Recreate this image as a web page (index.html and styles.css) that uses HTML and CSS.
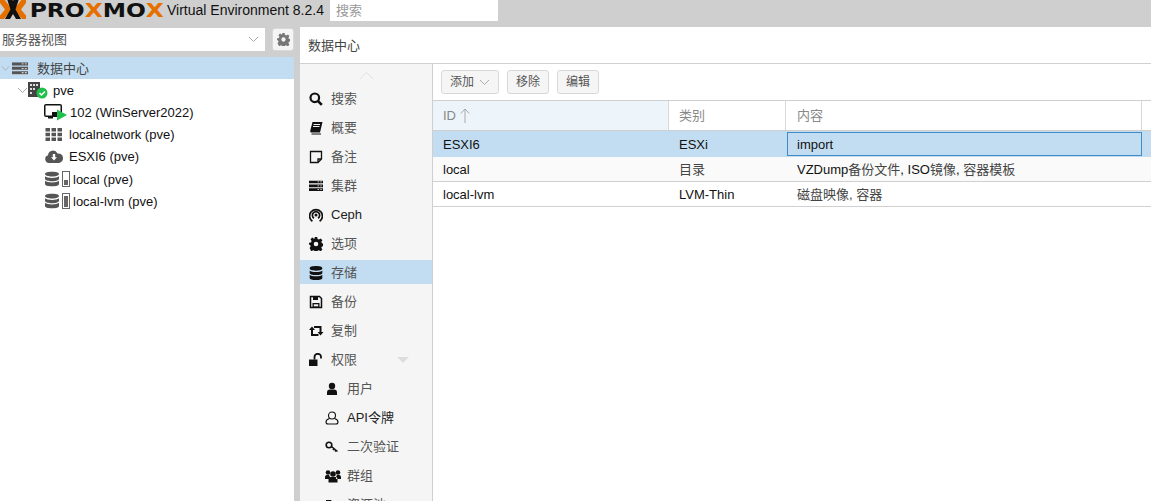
FILE: index.html
```html
<!DOCTYPE html>
<html lang="zh">
<head>
    <title>pve - Proxmox Virtual Environment</title>
    <link rel="stylesheet" href="styles.css">
</head>
<body>
    <div class="topbar">
        <svg class="logo-x" width="26" height="21" viewBox="0 0 26 21">
            <path d="M-3 -1H4L12 9.500 4 19H-3L5 9.500z" fill="#e57000"/>
            <path d="M29 -1H22L14 9.500 22 19H29L21 9.500z" fill="#e57000"/>
            <path d="M7 -1h5l1 2 1-2h5L15.500 9.500 21 19h-5l-3-5-3 5H5l5.500-9.500z" fill="#111"/>
        </svg>
        <div class="logo-word"><span>PRO</span><span class="orange">X</span><span>MO</span><span class="orange">X</span></div>
        <div class="version">Virtual Environment 8.2.4</div>
        <div class="search">搜索</div>
    </div>
    <div class="main">
        <div class="side">
            <div class="side-tools">
                <div class="view-select">
                    <span>服务器视图</span>
                    <svg width="11" height="7" viewBox="0 0 11 7"><path d="M1 1l4.500 4.500L10 1" fill="none" stroke="#aaa"/></svg>
                </div>
                <div class="gear-btn">
                    <svg width="13" height="13" viewBox="0 0 14 14"><use href="#gear" fill="#777"/></svg>
                </div>
            </div>
            <div class="tree">
                <div class="tree-row selected">
                    <svg class="twist" width="9" height="7" viewBox="0 0 11 7"><path d="M1 1l4.500 4.500L10 1" fill="none" stroke="#aaa"/></svg>
                    <svg class="tree-icon" width="16" height="13" viewBox="0 0 18 14"><use href="#server" fill="#555"/></svg>
                    <span class="dc-label">数据中心</span>
                </div>
                <div class="tree-row node-row">
                    <svg class="twist" width="11" height="7" viewBox="0 0 11 7"><path d="M1 1l4.500 4.500L10 1" fill="none" stroke="#aaa"/></svg>
                    <svg class="node-icon" width="20" height="17" viewBox="0 0 20 17">
                        <path d="M0 0h12v15H0z" fill="#444"/>
                        <path d="M2 2h2v2H2zM5 2h2v2H5zM8 2h2v2H8zM2 6h2v2H2zM5 6h2v2H5zM2 10h2v2H2z" fill="#ddd"/>
                        <circle cx="14" cy="11" r="5.500" fill="#21bf4b"/>
                        <path d="M11.500 11l2 2 3.500-3.500" fill="none" stroke="#fff" stroke-width="1.500"/>
                    </svg>
                    <span>pve</span>
                </div>
                <div class="tree-row leaf-row">
                    <svg class="vm-icon" width="24" height="17" viewBox="0 0 24 17">
                        <path d="M0 2q0-2 2-2h14q2 0 2 2v9q0 2-2 2H9v1.500H4V13H2q-2 0-2-2z" fill="#111"/>
                        <path d="M1.500 1.500h15v6.500H8v3.500H1.500z" fill="#fff"/>
                        <path d="M13 5.500l10 5.500-10 5.500z" fill="#21bf4b"/>
                    </svg>
                    <span>102 (WinServer2022)</span>
                </div>
                <div class="tree-row leaf-row">
                    <svg class="leaf-icon" width="17" height="13" viewBox="0 0 17 13" fill="#555">
                        <path d="M0 0h4.500v3.500H0zM6 0h4.500v3.500H6zM12 0h4.500v3.500H12zM0 4.800h4.500v3.500H0zM6 4.800h4.500v3.500H6zM12 4.800h4.500v3.500H12zM0 9.500h4.500V13H0zM6 9.500h4.500V13H6zM12 9.500h4.500V13H12z"/>
                    </svg>
                    <span>localnetwork (pve)</span>
                </div>
                <div class="tree-row leaf-row">
                    <svg class="leaf-icon" width="18" height="13" viewBox="0 0 18 13">
                        <path d="M4 13a4 4 0 0 1-1-7.800A5 5 0 0 1 12.500 3.500 4.800 4.800 0 0 1 14 13z" fill="#555"/>
                        <path d="M7.800 4h2.400v3.200H12L9 10.500 6 7.200h1.800z" fill="#fff"/>
                    </svg>
                    <span>ESXI6 (pve)</span>
                </div>
                <div class="tree-row storage-row">
                    <svg class="db-icon" width="14" height="16" viewBox="0 0 15 16"><use href="#db" fill="#555"/></svg>
                    <span class="bar-icon"><span class="bar-fill low"></span></span>
                    <span>local (pve)</span>
                </div>
                <div class="tree-row storage-row">
                    <svg class="db-icon" width="14" height="16" viewBox="0 0 15 16"><use href="#db" fill="#555"/></svg>
                    <span class="bar-icon"><span class="bar-fill high"></span></span>
                    <span>local-lvm (pve)</span>
                </div>
            </div>
        </div>
        <div class="content">
            <div class="title">数据中心</div>
            <div class="body">
                <div class="menu">
                    <div class="menu-up">
                        <svg width="15" height="9" viewBox="0 0 17 10"><path d="M1 9l7.500-7.500L16 9" fill="none" stroke="#ddd"/></svg>
                    </div>
                    <div class="menu-item">
                        <svg width="14" height="14" viewBox="0 0 14 14"><circle cx="5.800" cy="5.800" r="4.300" fill="none" stroke="#111" stroke-width="2.200"/><path d="M8.800 8.800l4 4" stroke="#111" stroke-width="2.600"/></svg>
                        <span>搜索</span>
                    </div>
                    <div class="menu-item">
                        <svg width="14" height="14" viewBox="0 0 14 14"><path d="M3.500 1H13.500L11 11.500H2.500q-1.500 0-1.300-1.500z" fill="#111"/><path d="M4.500 3.500h6.500M4 5.500h6.500" stroke="#f5f5f5"/><path d="M2.500 13h9.500" stroke="#111"/></svg>
                        <span>概要</span>
                    </div>
                    <div class="menu-item">
                        <svg width="14" height="14" viewBox="0 0 14 14"><path d="M1.500 1.500h11v7.500l-3.500 3.500H1.500zM12.500 9H9v3.500" fill="none" stroke="#111" stroke-width="1.300"/></svg>
                        <span>备注</span>
                    </div>
                    <div class="menu-item">
                        <svg width="14" height="14" viewBox="0 0 14 14"><use href="#server" fill="#111" y="1.500" width="14" height="11"/></svg>
                        <span>集群</span>
                    </div>
                    <div class="menu-item">
                        <svg width="14" height="14" viewBox="0 0 14 14"><path d="M3.400 13.300a6.400 6.400 0 1 1 7.200 0M5 10.300a3.600 3.600 0 1 1 4 0" fill="none" stroke="#111" stroke-width="1.700"/><circle cx="7" cy="7" r="1.500" fill="#111"/></svg>
                        <span class="latin">Ceph</span>
                    </div>
                    <div class="menu-item">
                        <svg width="14" height="14" viewBox="0 0 14 14"><use href="#gear" fill="#111"/></svg>
                        <span>选项</span>
                    </div>
                    <div class="menu-item active">
                        <svg width="14" height="14" viewBox="0 0 15 16"><use href="#db" fill="#111"/></svg>
                        <span>存储</span>
                    </div>
                    <div class="menu-item">
                        <svg width="14" height="14" viewBox="0 0 14 14"><path d="M1.500 1.500h9l2 2v9h-11z" fill="none" stroke="#111" stroke-width="1.500"/><path d="M4 1.500h5v3.500H4zM3.500 8h7v4.500h-7z" fill="#111"/><path d="M4.800 9.300h4.400v2H4.800z" fill="#f5f5f5"/></svg>
                        <span>备份</span>
                    </div>
                    <div class="menu-item">
                        <svg width="15" height="14" viewBox="0 0 15 14"><path d="M3 5v6h6.500M11.500 9V3H5" fill="none" stroke="#111" stroke-width="2"/><path d="M0 6l3-3.500L6 6zM8.500 8h6l-3 3.500z" fill="#111"/></svg>
                        <span class="copy-label">复制</span>
                    </div>
                    <div class="menu-item">
                        <svg width="14" height="14" viewBox="0 0 14 14"><path d="M0 6.500h8.500V13H0z" fill="#111"/><path d="M5.500 6.500V4a3.200 3.200 0 0 1 6.500 0v1.500" fill="none" stroke="#111" stroke-width="1.800"/></svg>
                        <span>权限</span>
                        <svg class="menu-caret" width="12" height="7" viewBox="0 0 12 7"><path d="M0 0h12L6 6z" fill="#ddd"/></svg>
                    </div>
                    <div class="menu-item sub">
                        <svg width="14" height="14" viewBox="0 0 14 14"><circle cx="7" cy="4" r="3.200" fill="#111"/><path d="M2 13v-2.500Q2 7.500 5 7.500h4q3 0 3 3V13z" fill="#111"/></svg>
                        <span>用户</span>
                    </div>
                    <div class="menu-item sub">
                        <svg width="14" height="14" viewBox="0 0 14 14"><circle cx="7" cy="4.500" r="3.500" fill="none" stroke="#111" stroke-width="1.100"/><path d="M4.500 7.500Q1 8.500 1 11q0 2 2 2h8q2 0 2-2 0-2.500-3.500-3.500" fill="none" stroke="#111" stroke-width="1.100"/></svg>
                        <span class="latin">API令牌</span>
                    </div>
                    <div class="menu-item sub">
                        <svg width="14" height="14" viewBox="0 0 14 14"><circle cx="4" cy="5" r="2.800" fill="none" stroke="#111" stroke-width="1.600"/><path d="M6.500 6.500l6 5M9 8.500l-1 1.500M11 10l-1 1.500" fill="none" stroke="#111" stroke-width="1.500"/></svg>
                        <span>二次验证</span>
                    </div>
                    <div class="menu-item sub">
                        <svg width="16" height="14" viewBox="0 0 16 14" fill="#111"><circle cx="3" cy="3.500" r="2.300"/><circle cx="13" cy="3.500" r="2.300"/><circle cx="8" cy="5" r="2.800"/><path d="M0 10V8q0-2 2-2h2l1 2v2zM16 10V8q0-2-2-2h-2l-1 2v2zM3.500 13.500V10q0-2 2-2h5q2 0 2 2v3.500z"/></svg>
                        <span class="group-label">群组</span>
                    </div>
                    <div class="menu-item sub">
                        <svg width="14" height="14" viewBox="0 0 14 14" fill="#111"><path d="M1 2h5l1 1.500h6V12H1z"/></svg>
                        <span>资源池</span>
                    </div>
                </div>
                <div class="panel">
                    <div class="toolbar">
                        <div class="btn">添加
                            <svg width="11" height="7" viewBox="0 0 11 7"><path d="M1 1l4.500 4.500L10 1" fill="none" stroke="#aaa"/></svg>
                        </div>
                        <div class="btn">移除</div>
                        <div class="btn">编辑</div>
                    </div>
                    <div class="grid">
                        <div class="grid-head">
                            <div class="cell col-id sorted">ID
                                <svg width="10" height="15" viewBox="0 0 10 15"><path d="M5 15V1M.7 5.500L5 1l4.300 4.500" fill="none" stroke="#aaa"/></svg>
                            </div>
                            <div class="cell col-type">类别</div>
                            <div class="cell col-content">内容</div>
                        </div>
                        <div class="grid-row picked">
                            <div class="cell col-id">ESXI6</div>
                            <div class="cell col-type">ESXi</div>
                            <div class="cell col-content focused">import</div>
                        </div>
                        <div class="grid-row alt">
                            <div class="cell col-id">local</div>
                            <div class="cell col-type"><span class="cjk">目录</span></div>
                            <div class="cell col-content"><span>VZDump<span class="cjk">备份文件</span>, ISO<span class="cjk">镜像</span>, <span class="cjk">容器模板</span></span></div>
                        </div>
                        <div class="grid-row">
                            <div class="cell col-id">local-lvm</div>
                            <div class="cell col-type">LVM-Thin</div>
                            <div class="cell col-content"><span class="cjk">磁盘映像, 容器</span></div>
                        </div>
                    </div>
                </div>
            </div>
        </div>
    </div>

    <svg width="0" height="0" class="defs">
        <symbol id="gear" viewBox="0 0 14 14">
            <path d="M5.800 0h2.400l.4 2 1.300.6 1.800-1.100 1.700 1.700-1.100 1.800.6 1.300 2 .4v2.400l-2 .4-.6 1.300 1.100 1.800-1.700 1.700-1.800-1.100-1.300.6-.4 2H5.800l-.4-2-1.300-.6-1.800 1.100L.6 11.100l1.100-1.800L1.100 8 0 7.600V5.800l2-.4.600-1.300L1.500 2.300 3.200.6 5 1.700l.6-.3zM7 4.700a2.300 2.300 0 1 0 0 4.600 2.300 2.300 0 0 0 0-4.600z" fill-rule="evenodd"/>
        </symbol>
        <symbol id="server" viewBox="0 0 18 14">
            <path d="M0 0h18v3.500H0zM0 5h18v3.500H0zM0 10h18v3.500H0z"/>
            <path d="M11 1.300h2v1h-2zM14.500 1.300h2v1h-2zM11 6.300h2v1h-2zM14.500 6.300h2v1h-2zM11 11.300h2v1h-2zM14.500 11.300h2v1h-2z" fill="#fff"/>
        </symbol>
        <symbol id="db" viewBox="0 0 15 16">
            <path d="M7.500 0C11.500 0 15 1 15 2.700S11.500 5.400 7.500 5.400 0 4.400 0 2.700 3.500 0 7.500 0zM0 5c1.500 1.300 4.500 1.800 7.500 1.800S13.500 6.300 15 5v2.600c0 1.700-3.500 2.700-7.500 2.700S0 9.300 0 7.600zM0 10c1.500 1.300 4.500 1.800 7.500 1.800s6-.5 7.500-1.800v3.300C15 15 11.500 16 7.500 16S0 15 0 13.300z"/>
        </symbol>
    </svg>
</body>
</html>
```

FILE: styles.css
```css
* {
    margin: 0;
    padding: 0;
    box-sizing: border-box;
}
html, body {
    height: 100%;
    overflow: hidden;
}
body {
    font-family: "Liberation Sans", "Noto Sans CJK SC", sans-serif;
    font-size: 13px;
    line-height: 15px;
    color: #000;
    background: #cfcfcf;
}
.defs {
    position: absolute;
}
.topbar {
    display: flex;
    height: 27px;
    overflow: hidden;
    background: #cfcfcf;
}
.logo-x {
    flex: none;
    width: 26px;
}
.logo-word {
    display: flex;
    align-items: center;
    width: 141px;
    height: 21px;
    padding-left: 3px;
    font-family: "DejaVu Sans", sans-serif;
    font-weight: bold;
    font-size: 19px;
    color: #111;
    transform: scaleX(1.23);
    transform-origin: left center;
}
.orange {
    color: #e57000;
}
.version {
    width: 163px;
    height: 21px;
    line-height: 21px;
    font-size: 14px;
    color: #111;
}
.search {
    display: flex;
    align-items: center;
    width: 168px;
    height: 21px;
    background: #fff;
    color: #999;
    padding-left: 6px;
}
.main {
    display: flex;
    height: 474px;
}
.side {
    width: 294px;
    flex: none;
}
.side-tools {
    display: flex;
    gap: 7px;
    height: 30px;
    padding-top: 1px;
}
.view-select {
    display: flex;
    justify-content: space-between;
    align-items: center;
    width: 265px;
    height: 23px;
    background: #fff;
    color: #555;
    padding: 0 6px 0 2px;
}
.gear-btn {
    display: flex;
    align-items: center;
    justify-content: center;
    width: 22px;
    height: 23px;
    background: #f5f5f5;
    border: 1px solid #d8d8d8;
    border-radius: 3px;
}
.tree {
    background: #fff;
    height: 444px;
}
.tree-row {
    display: flex;
    align-items: center;
    height: 22px;
    color: #111;
}
.tree-row.selected {
    background: #c2ddf2;
    color: #444;
}
.twist {
    flex: none;
}
.selected .twist {
    margin-left: 1px;
}
.tree-icon {
    margin-left: 2px;
}
.dc-label {
    margin-left: 9px;
}
.node-row .twist {
    margin-left: 17px;
}
.node-icon {
    margin-right: 5px;
}
.leaf-row, .storage-row {
    padding-left: 44px;
}
.leaf-row + .storage-row {
    margin-top: 1px;
}
.vm-icon {
    margin-right: 2px;
    flex: none;
}
.leaf-icon {
    width: 20px;
    margin-right: 5px;
    flex: none;
}
.db-icon {
    margin-left: 1px;
}
.bar-icon {
    display: flex;
    align-items: flex-end;
    width: 8px;
    height: 16px;
    margin: 0 3px;
    padding: 1px;
    border: 1px solid #666;
    background: #fff;
}
.bar-fill {
    display: block;
    width: 100%;
    background: #666;
}
.bar-fill.low {
    height: 45%;
}
.bar-fill.high {
    height: 90%;
}
.content {
    flex: 1;
    margin-left: 6px;
    background: #fff;
    min-width: 0;
}
.title {
    display: flex;
    align-items: center;
    height: 37px;
    padding-left: 8px;
    color: #444;
    background: #fff;
    border-bottom: 1px solid #d0d0d0;
}
.body {
    display: flex;
    height: 437px;
}
.menu {
    width: 133px;
    flex: none;
    overflow: hidden;
    background: #f5f5f5;
    border-right: 1px solid #cfcfcf;
}
.menu-up {
    display: flex;
    justify-content: center;
    height: 22px;
    padding-top: 7px;
}
.menu-item {
    display: flex;
    align-items: center;
    height: 24px;
    margin-bottom: 5px;
    padding-left: 9px;
    color: #555;
    gap: 8px;
}
.menu-item svg {
    flex: none;
    margin-top: 2px;
}
.menu-item.active {
    background: #c2ddf2;
}
.menu-item.sub {
    padding-left: 25px;
}
.copy-label {
    margin-left: -1px;
}
.group-label {
    margin-left: -2px;
}
.latin {
    color: #222;
}
.menu-caret {
    margin-left: 32px;
}
.panel {
    flex: 1;
    min-width: 0;
}
.toolbar {
    display: flex;
    align-items: center;
    gap: 8px;
    height: 36px;
    padding-left: 8px;
}
.btn {
    display: flex;
    align-items: center;
    gap: 5px;
    height: 24px;
    padding: 0 8px;
    font-size: 12px;
    color: #555;
    background: #f5f5f5;
    border: 1px solid #d8d8d8;
    border-radius: 3px;
}
.grid-head, .grid-row {
    display: flex;
}
.grid-head {
    height: 31px;
    border-top: 1px solid #cfcfcf;
    border-bottom: 1px solid #cfcfcf;
    color: #888;
}
.grid-row {
    height: 25px;
    border-bottom: 1px solid #d0d0d0;
    color: #111;
    align-items: center;
}
.grid-row.picked {
    background: #c2ddf2;
    height: 26px;
    border-bottom: none;
}
.grid-row.alt {
    background: #fafafa;
}
.cell {
    display: flex;
    align-items: center;
    gap: 4px;
    height: 100%;
    padding-left: 10px;
}
.cjk {
    color: #444;
}
.col-id {
    width: 236px;
}
.col-type {
    width: 117px;
}
.col-content {
    width: 356px;
    padding-left: 11px;
}
.grid-head .col-id, .grid-head .col-type {
    border-right: 1px solid #d8d8d8;
}
.grid-head .col-content {
    border-right: 1px solid #d8d8d8;
}
.grid-head .sorted {
    background: #edf4fa;
}
.focused {
    width: 355px;
    height: 24px;
    margin-left: 1px;
    border: 1px solid #3f8cc9;
    padding-left: 9px;
}
```
